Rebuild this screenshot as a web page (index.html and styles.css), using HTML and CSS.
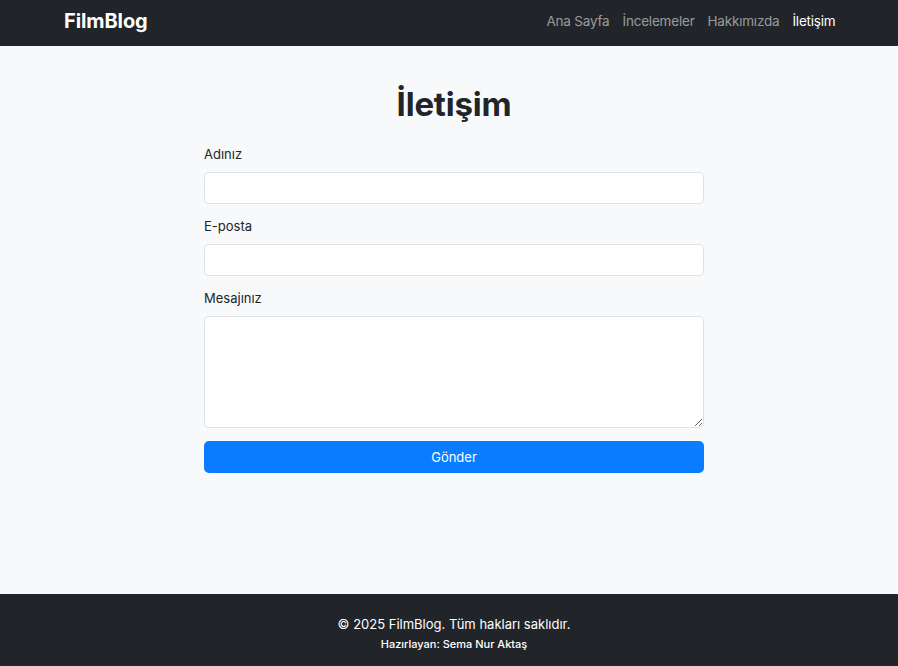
FILE: index.html
```html
<!DOCTYPE html>
<html lang="tr">
<head>
<meta charset="utf-8">
<title>İletişim - FilmBlog</title>
<link rel="stylesheet" href="styles.css">
</head>
<body>
<header class="navbar">
  <a class="brand" href="#">FilmBlog</a>
  <nav class="nav">
    <a class="nav-link" href="#">Ana Sayfa</a>
    <a class="nav-link" href="#">İncelemeler</a>
    <a class="nav-link" href="#">Hakkımızda</a>
    <a class="nav-link active" href="#">İletişim</a>
  </nav>
</header>
<main class="main">
  <h1 class="title">İletişim</h1>
  <form class="form">
    <label class="label" for="ad">Adınız</label>
    <input class="control" id="ad" type="text">
    <label class="label" for="mail">E-posta</label>
    <input class="control" id="mail" type="email">
    <label class="label" for="msg">Mesajınız</label>
    <textarea class="control area" id="msg"></textarea>
    <button class="btn" type="button">Gönder</button>
  </form>
</main>
<footer class="footer">
  <p class="copy">© 2025 FilmBlog. Tüm hakları saklıdır.</p>
  <p class="author">Hazırlayan: Sema Nur Aktaş</p>
</footer>
</body>
</html>
```
FILE: styles.css
```css
* { box-sizing: border-box; }
html, body { height: 100%; }
body {
  margin: 0;
  font-family: Inter, "Noto Sans", sans-serif;
  color: #212529;
  background: #f8f9fa;
  display: flex;
  flex-direction: column;
}
.navbar {
  height: 46px;
  background: #212529;
  display: flex;
  align-items: center;
  justify-content: space-between;
  padding: 0 56px 4px 64px;
}
.brand {
  color: #fff;
  font-weight: 700;
  font-size: 20px;
  text-decoration: none;
  letter-spacing: -0.1px;
}
.nav { display: flex; }
.nav-link {
  color: rgba(255,255,255,.55);
  text-decoration: none;
  font-size: 13.5px;
  padding: 0 6.5px;
  letter-spacing: -0.2px;
}
.nav-link.active { color: #fff; }
.main {
  flex: 1;
  display: flex;
  flex-direction: column;
  align-items: center;
  padding: 38px 0 0 10px;
}
.title {
  margin: 0 0 22px;
  font-size: 33px;
  font-weight: 700;
  line-height: 40px;
  letter-spacing: -0.2px;
}
.form {
  width: 500px;
  display: flex;
  flex-direction: column;
}
.label {
  font-size: 13px;
  line-height: 16px;
  margin-bottom: 10px;
}
.control {
  height: 32px;
  border: 1px solid #dee2e6;
  border-radius: 5px;
  background: #fff;
  font: inherit;
  margin-bottom: 14px;
}
.area {
  height: 112px;
  margin-bottom: 13px;
  resize: vertical;
}
.btn {
  height: 32px;
  border: none;
  border-radius: 5px;
  background: #0a7cff;
  color: #fff;
  font: inherit;
  font-size: 13px;
}
.footer {
  height: 72px;
  background: #212529;
  color: #fff;
  text-align: center;
  padding: 21px 0 0 10px;
}
.copy { margin: 0; font-size: 13px; line-height: 18px; }
.author { margin: 4px 0 0; font-size: 11px; line-height: 14px; font-weight: 500; }
```
